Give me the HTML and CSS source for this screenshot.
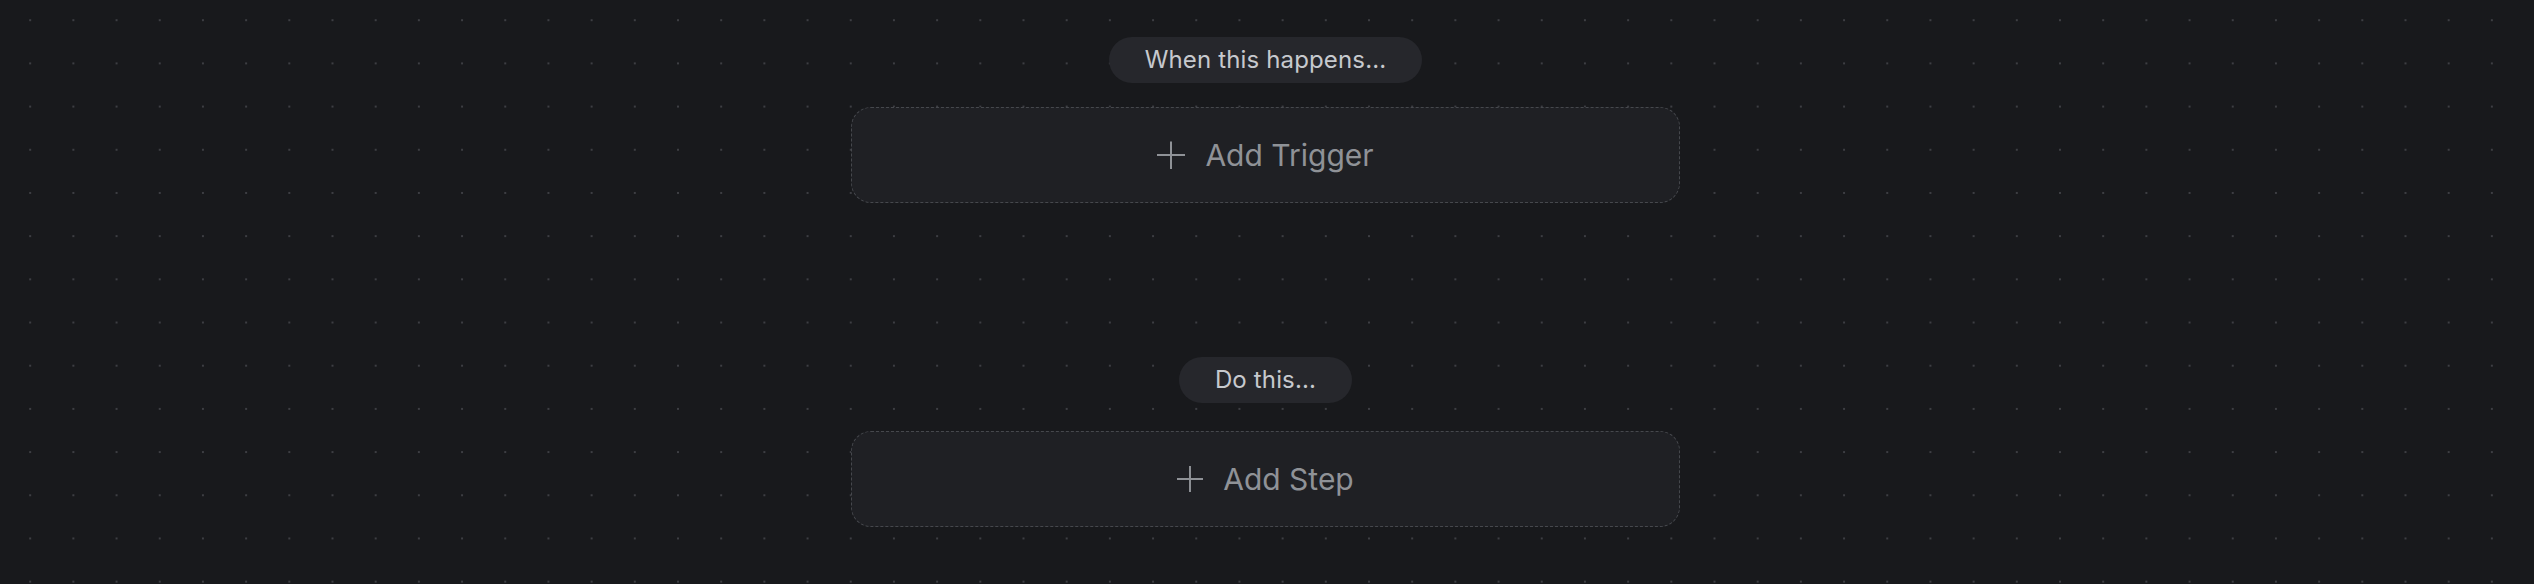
FILE: index.html
```html
<!DOCTYPE html>
<html lang="en">
<head>
<meta charset="utf-8">
<title>Workflow</title>
<link rel="stylesheet" href="styles.css">
</head>
<body>
<main class="canvas">
  <div class="flow">
    <div class="label label-trigger">When this happens...</div>
    <button class="slot slot-trigger" type="button">
      <svg class="plus" viewBox="0 0 28 28" width="28" height="28" aria-hidden="true"><path d="M14 0.5V28.5M0 14H28" fill="none" stroke="currentColor" stroke-width="2"/></svg>
      <span>Add Trigger</span>
    </button>
    <div class="label label-action">Do this...</div>
    <button class="slot slot-action" type="button">
      <svg class="plus" viewBox="0 0 28 28" width="26" height="26" aria-hidden="true"><path d="M14 0V28M0 14H28" fill="none" stroke="currentColor" stroke-width="2.1"/></svg>
      <span>Add Step</span>
    </button>
  </div>
</main>
</body>
</html>
```

FILE: styles.css
```css
html, body {
  margin: 0;
  padding: 0;
  height: 100%;
}

body {
  background-color: #18191c;
  background-image: radial-gradient(circle, #3d3e43 0, #3d3e43 1px, transparent 1.3px);
  background-size: 43.2px 43.2px;
  background-position: 8.6px -1.4px;
  font-family: Inter, "Noto Sans", "Liberation Sans", sans-serif;
  overflow: hidden;
}

.canvas {
  width: 100%;
  height: 100%;
}

.flow {
  display: flex;
  flex-direction: column;
  align-items: center;
  padding-top: 37px;
  padding-right: 3px;
}

.label {
  height: 46px;
  line-height: 46px;
  padding: 0 36px;
  border-radius: 23px;
  background: #26272c;
  color: #c6c9ce;
  font-size: 24px;
  letter-spacing: 0.15px;
  white-space: nowrap;
}

.slot {
  box-sizing: border-box;
  width: 829px;
  height: 96px;
  border: 1px dashed #46484d;
  border-radius: 20px;
  background: #1f2024;
  color: #8f9297;
  font-family: inherit;
  font-size: 30px;
  display: flex;
  align-items: center;
  justify-content: center;
  gap: 20px;
  padding: 0;
  cursor: pointer;
}

.slot span {
  line-height: 1;
}

.plus {
  display: block;
  color: #8f9297;
}

.slot-trigger {
  margin-top: 24px;
}

.label-action {
  margin-top: 154px;
}

.slot-action {
  margin-top: 28px;
}
```
